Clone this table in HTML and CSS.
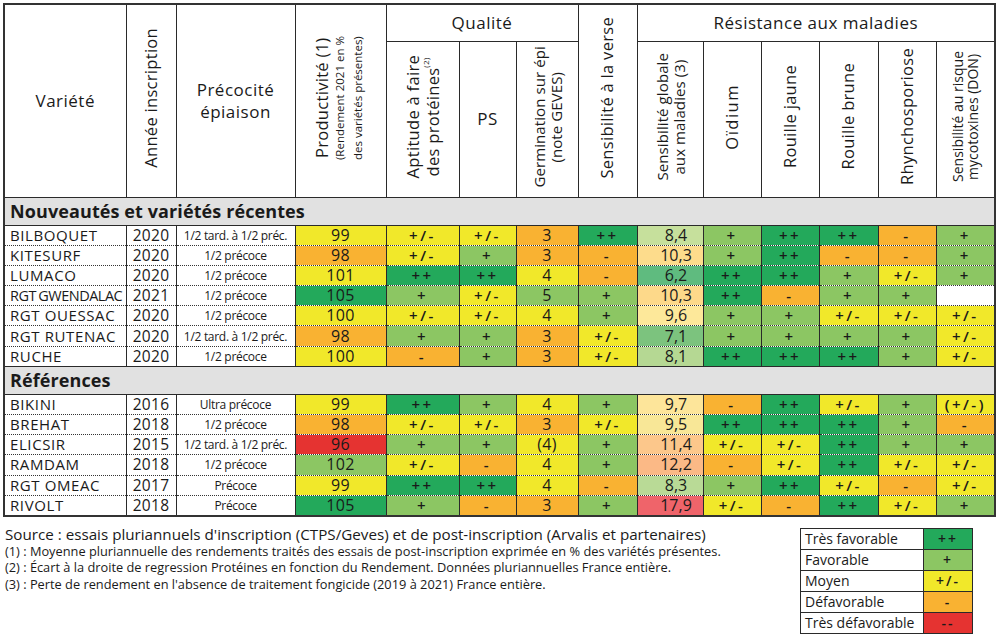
FILE: index.html
```html
<!DOCTYPE html>
<html lang="fr">
<head>
<meta charset="utf-8">
<title>Variétés</title>
<link rel="stylesheet" href="styles.css">
</head>
<body>
<table class="grid">
<colgroup>
<col style="width:122px"><col style="width:50px"><col style="width:119px"><col style="width:91px">
<col style="width:73px"><col style="width:57px"><col style="width:62px"><col style="width:59px">
<col style="width:66px"><col style="width:58px"><col style="width:58px"><col style="width:59px">
<col style="width:58px"><col style="width:59px">
</colgroup>
<thead>
<tr class="h1">
<th rowspan="2" class="hz">Variété</th>
<th rowspan="2"><div class="vt">Année inscription</div></th>
<th rowspan="2" class="hz">Précocité<br>épiaison</th>
<th rowspan="2"><div class="vt">Productivité (1)<br><span class="sub">(Rendement 2021 en %<br>des variétés présentes)</span></div></th>
<th colspan="3" class="grp">Qualité</th>
<th rowspan="2"><div class="vt">Sensibilité à la verse</div></th>
<th colspan="6" class="grp">Résistance aux maladies</th>
</tr>
<tr class="h2">
<th><div class="vt">Aptitude à faire<br>des protéines<sup>(2)</sup></div></th>
<th class="hz">PS</th>
<th><div class="vt long">Germination sur épi<br>(note GEVES)</div></th>
<th><div class="vt long">Sensibilité globale<br>aux maladies (3)</div></th>
<th><div class="vt wide">Oïdium</div></th>
<th><div class="vt">Rouille jaune</div></th>
<th><div class="vt">Rouille brune</div></th>
<th><div class="vt">Rhynchosporiose</div></th>
<th><div class="vt small">Sensibilité au risque<br>mycotoxines (DON)</div></th>
</tr>
</thead>
<tbody>
<tr class="sec"><th colspan="14">Nouveautés et variétés récentes</th></tr>
<tr><td class="nm">BILBOQUET</td><td class="yr">2020</td><td class="pr">1/2 tard. à 1/2 préc.</td><td class="y num">99</td><td class="y">+/-</td><td class="y">+/-</td><td class="o num">3</td><td class="dg">++</td><td class="sg" style="background:#c6e09c">8,4</td><td class="lg">+</td><td class="dg">++</td><td class="dg">++</td><td class="o">-</td><td class="lg">+</td></tr>
<tr><td class="nm">KITESURF</td><td class="yr">2020</td><td class="pr">1/2 précoce</td><td class="o num">98</td><td class="y">+/-</td><td class="lg">+</td><td class="o num">3</td><td class="o">-</td><td class="sg" style="background:#fddc8c">10,3</td><td class="lg">+</td><td class="dg">++</td><td class="o">-</td><td class="o">-</td><td class="lg">+</td></tr>
<tr><td class="nm">LUMACO</td><td class="yr">2020</td><td class="pr">1/2 précoce</td><td class="y num">101</td><td class="dg">++</td><td class="dg">++</td><td class="y num">4</td><td class="o">-</td><td class="sg" style="background:#5fbb7f">6,2</td><td class="dg">++</td><td class="dg">++</td><td class="lg">+</td><td class="y">+/-</td><td class="lg">+</td></tr>
<tr><td class="nm cond">RGT GWENDALAC</td><td class="yr">2021</td><td class="pr">1/2 précoce</td><td class="dg num">105</td><td class="lg">+</td><td class="y">+/-</td><td class="lg num">5</td><td class="lg">+</td><td class="sg" style="background:#fdd98a">10,3</td><td class="dg">++</td><td class="o">-</td><td class="lg">+</td><td class="lg">+</td><td class="w"></td></tr>
<tr><td class="nm">RGT OUESSAC</td><td class="yr">2020</td><td class="pr">1/2 précoce</td><td class="y num">100</td><td class="y">+/-</td><td class="y">+/-</td><td class="y num">4</td><td class="lg">+</td><td class="sg" style="background:#fde89a">9,6</td><td class="lg">+</td><td class="lg">+</td><td class="y">+/-</td><td class="y">+/-</td><td class="y">+/-</td></tr>
<tr><td class="nm">RGT RUTENAC</td><td class="yr">2020</td><td class="pr">1/2 tard. à 1/2 préc.</td><td class="o num">98</td><td class="lg">+</td><td class="lg">+</td><td class="o num">3</td><td class="y">+/-</td><td class="sg" style="background:#7cc37e">7,1</td><td class="lg">+</td><td class="lg">+</td><td class="lg">+</td><td class="lg">+</td><td class="y">+/-</td></tr>
<tr><td class="nm">RUCHE</td><td class="yr">2020</td><td class="pr">1/2 précoce</td><td class="y num">100</td><td class="o">-</td><td class="lg">+</td><td class="o num">3</td><td class="y">+/-</td><td class="sg" style="background:#b5d893">8,1</td><td class="dg">++</td><td class="dg">++</td><td class="dg">++</td><td class="lg">+</td><td class="y">+/-</td></tr>
<tr class="sec"><th colspan="14">Références</th></tr>
<tr><td class="nm">BIKINI</td><td class="yr">2016</td><td class="pr">Ultra précoce</td><td class="y num">99</td><td class="dg">++</td><td class="lg">+</td><td class="y num">4</td><td class="lg">+</td><td class="sg" style="background:#fde59a">9,7</td><td class="o">-</td><td class="dg">++</td><td class="y">+/-</td><td class="lg">+</td><td class="y">(+/-)</td></tr>
<tr><td class="nm">BREHAT</td><td class="yr">2018</td><td class="pr">1/2 précoce</td><td class="o num">98</td><td class="y">+/-</td><td class="y">+/-</td><td class="o num">3</td><td class="y">+/-</td><td class="sg" style="background:#f8e797">9,5</td><td class="dg">++</td><td class="dg">++</td><td class="dg">++</td><td class="lg">+</td><td class="o">-</td></tr>
<tr><td class="nm">ELICSIR</td><td class="yr">2015</td><td class="pr">1/2 tard. à 1/2 préc.</td><td class="r num">96</td><td class="lg">+</td><td class="lg">+</td><td class="y num">(4)</td><td class="lg">+</td><td class="sg" style="background:#fcc78b">11,4</td><td class="y">+/-</td><td class="y">+/-</td><td class="dg">++</td><td class="lg">+</td><td class="lg">+</td></tr>
<tr><td class="nm">RAMDAM</td><td class="yr">2018</td><td class="pr">1/2 précoce</td><td class="lg num">102</td><td class="y">+/-</td><td class="o">-</td><td class="y num">4</td><td class="lg">+</td><td class="sg" style="background:#fbb986">12,2</td><td class="o">-</td><td class="y">+/-</td><td class="dg">++</td><td class="y">+/-</td><td class="y">+/-</td></tr>
<tr><td class="nm">RGT OMEAC</td><td class="yr">2017</td><td class="pr">Précoce</td><td class="y num">99</td><td class="dg">++</td><td class="dg">++</td><td class="y num">4</td><td class="o">-</td><td class="sg" style="background:#b9da96">8,3</td><td class="lg">+</td><td class="dg">++</td><td class="y">+/-</td><td class="o">-</td><td class="y">+/-</td></tr>
<tr><td class="nm">RIVOLT</td><td class="yr">2018</td><td class="pr">Précoce</td><td class="dg num">105</td><td class="lg">+</td><td class="o">-</td><td class="o num">3</td><td class="lg">+</td><td class="sg" style="background:#ef646a">17,9</td><td class="y">+/-</td><td class="o">-</td><td class="dg">++</td><td class="y">+/-</td><td class="lg">+</td></tr>
</tbody>
</table>

<div class="bottom">
<div class="notes">
<p class="src">Source : essais pluriannuels d'inscription (CTPS/Geves) et de post-inscription (Arvalis et partenaires)</p>
<p>(1) : Moyenne pluriannuelle des rendements traités des essais de post-inscription exprimée en % des variétés présentes.</p>
<p>(2) : Écart à la droite de regression Protéines en fonction du Rendement. Données pluriannuelles France entière.</p>
<p>(3) : Perte de rendement en l'absence de traitement fongicide (2019 à 2021) France entière.</p>
</div>
<table class="legend">
<tr><td class="lb">Très favorable</td><td class="dg">++</td></tr>
<tr><td class="lb">Favorable</td><td class="lg">+</td></tr>
<tr><td class="lb">Moyen</td><td class="y">+/-</td></tr>
<tr><td class="lb">Défavorable</td><td class="o">-</td></tr>
<tr><td class="lb">Très défavorable</td><td class="r">--</td></tr>
</table>
</div>
</body>
</html>
```

FILE: styles.css
```css
html, body {
  margin: 0;
  padding: 0;
  background: #ffffff;
}
body {
  font-family: "Open Sans", "Liberation Sans", sans-serif;
  color: #1a1a1a;
  width: 1000px;
  height: 637px;
  overflow: hidden;
}
.grid {
  border-collapse: collapse;
  table-layout: fixed;
  width: 991px;
  margin: 3px 0 0 3px;
  border: 2px solid #333;
}
.grid th, .grid td {
  padding: 0;
  border-left: 1.5px solid #2a2a2a;
  border-right: 1.5px solid #2a2a2a;
  overflow: hidden;
  white-space: nowrap;
}
.grid thead th {
  font-weight: normal;
  font-size: 17px;
  letter-spacing: 0.5px;
  border: 1.5px solid #2a2a2a;
  text-align: center;
  vertical-align: middle;
  line-height: 1.3;
}
.h1 { height: 37px; }
.h2 { height: 156px; }
.grp { font-size: 17px; }
.vt {
  display: inline-block;
  writing-mode: vertical-rl;
  transform: rotate(180deg);
  text-align: center;
  font-size: 16.5px;
  letter-spacing: 0.3px;
  line-height: 1.1;
  white-space: nowrap;
}
.vt.long { font-size: 15px; letter-spacing: 0.1px; }
.vt.wide { letter-spacing: 1.5px; }
.vt .sub { font-size: 11.5px; letter-spacing: 0; line-height: 1.1; }
.vt sup { font-size: 8px; vertical-align: super; }
.vt.small { font-size: 14px; letter-spacing: 0; }
.sec th {
  background: #e1e1e1;
  text-align: left;
  font-size: 18px;
  font-weight: bold;
  padding-left: 5px;
  height: 27px;
  border-top: 1.5px solid #2a2a2a;
  border-bottom: 1.5px solid #2a2a2a;
  letter-spacing: 0.1px;
}
.grid tbody td {
  height: 19.2px;
  border-top: 1px dotted #333;
  border-bottom: 1px dotted #333;
  text-align: center;
  font-size: 15px;
  font-weight: 600;
  letter-spacing: 2.5px;
  line-height: 19px;
  vertical-align: middle;
}
.grid tbody td.nm {
  text-align: left;
  padding-left: 5px;
  font-size: 15px;
  font-weight: normal;
  letter-spacing: 0.6px;
}
.grid tbody td.nm.cond {
  font-size: 14.5px;
  letter-spacing: -0.5px;
  word-spacing: -1px;
}
.grid tbody td.yr { font-size: 15.5px; font-weight: normal; letter-spacing: 0.3px; }
.grid tbody td.pr { font-size: 12px; font-weight: normal; letter-spacing: -0.3px; }
.grid tbody td.num { font-size: 16px; font-weight: normal; letter-spacing: 0.3px; }
.grid tbody td.sg { font-size: 16px; font-weight: normal; letter-spacing: 0; padding-left: 12px; }
.dg { background: #23a95b; }
.lg { background: #8cc663; }
.y { background: #f1e82a; }
.o { background: #f9b232; }
.r { background: #e53331; }
.w { background: #ffffff; }

.bottom {
  display: flex;
  align-items: flex-start;
  margin-top: 8px;
}
.notes {
  margin-left: 5px;
  flex: 1;
}
.notes p {
  margin: 0;
  font-size: 12.8px;
  line-height: 16.5px;
  white-space: nowrap;
}
.notes p.src {
  font-size: 15.2px;
  line-height: 18px;
}
.legend {
  border-collapse: collapse;
  width: 173px;
  margin: 3px 27px 0 0;
  border: 1.5px solid #2a2a2a;
}
.legend td {
  height: 20px;
  padding: 0;
  border: 1px solid #2a2a2a;
  font-size: 14px;
  line-height: 20px;
}
.legend td.lb {
  width: 118px;
  padding-left: 4px;
  background: #fff;
}
.legend td.dg, .legend td.lg, .legend td.y, .legend td.o, .legend td.r {
  text-align: center;
  font-weight: 600;
  letter-spacing: 2px;
}
```
